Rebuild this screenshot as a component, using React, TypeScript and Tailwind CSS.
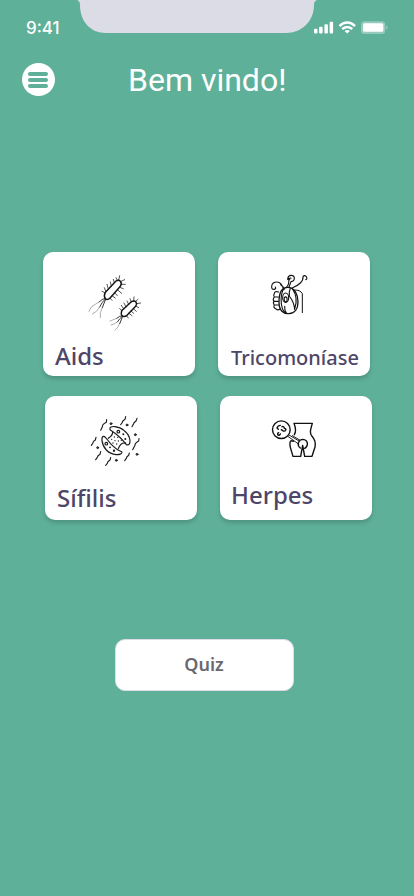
import type { ReactNode } from "react";

function StatusBar() {
  return (
    <div className="flex h-[34px] w-full items-start">
      <div className="w-[76px] pl-[26px] pt-[18px] font-['Inter',sans-serif] text-[17px] font-medium leading-[20px] text-white">
        9:41
      </div>
      <svg width="242" height="34" viewBox="0 0 242 34" className="shrink-0" aria-hidden="true">
        <path d="M1 0H241C239 .8 238 2 238 5C238 21 226 33 210 33H30C14 33 4 21 4 5C4 2 3 .8 1 0Z" fill="#dcdce6" />
      </svg>
      <svg width="76" height="16" viewBox="0 0 76 16" className="-ml-1 mt-5 shrink-0" aria-hidden="true">
        <g fill="#fff">
          <rect x="0" y="8.800" width="3.500" height="4.700" rx="1" />
          <rect x="5.100" y="6.800" width="3.500" height="6.700" rx="1" />
          <rect x="10.400" y="4.200" width="3.500" height="9.300" rx="1" />
          <rect x="15.600" y="1.800" width="3.500" height="11.700" rx="1" />
        </g>
        <g fill="none" stroke="#fff" strokeWidth="2.500">
          <path d="M25.500 6.100C30 1.300 36.500 1.300 41 6.100" />
          <path d="M28.300 9.200C31 6.200 35.500 6.200 38.200 9.200" />
        </g>
        <path d="M33.250 13.500L30.600 10.900Q33.250 8.900 35.900 10.900Z" fill="#fff" />
        <rect x="47" y="1.200" width="24.300" height="12.800" rx="3.500" fill="#fff" opacity=".35" />
        <rect x="49" y="3.300" width="20.300" height="8.500" rx="1.500" fill="#fff" />
        <path d="M72.200 5.500Q75 7.500 72.200 9.800Z" fill="#fff" opacity=".4" />
      </svg>
    </div>
  );
}

function MenuButton() {
  return (
    <button aria-label="Menu" className="flex size-[33px] shrink-0 flex-col items-center justify-center gap-[2px] rounded-full bg-white">
      <span className="h-[4px] w-[20px] rounded-full bg-[#5eb099]" />
      <span className="h-[4px] w-[20px] rounded-full bg-[#5eb099]" />
      <span className="h-[4px] w-[20px] rounded-full bg-[#5eb099]" />
    </button>
  );
}

function Bacteria() {
  return (
    <svg width="70" height="70" viewBox="0 0 210 210" fill="none" stroke="#161616" strokeLinecap="round" strokeLinejoin="round">
      <g strokeWidth="4.400">
        <path d="M75 83L108 48Q116 43 121 49Q127 56 121 64L91 98Q82 107 76 101Q71 95 75 83Z" />
        <path d="M125 137L154 110Q163 105 168 111Q172 117 167 124L141 151Q132 158 126 152Q122 147 125 137Z" />
      </g>
      <g strokeWidth="2.200">
        <path d="M76 84L66 79M78 80L73 68M85 72L81 58M94 63L91 51M103 53L100 43M112 46L108 38M116 46L119 32M121 50L134 44M123 58L136 58M119 67L130 71M112 74L125 85M104 83L112 92M96 92L106 99M89 99L96 106" />
        <path d="M126 137L119 131M131 132L124 121M138 126L132 114M146 118L141 108M154 111L150 101M161 109L162 96M166 110L174 103M170 116L182 114M167 123L176 128M160 131L169 139M153 138L161 145M147 145L156 152M139 152L145 159" />
      </g>
      <g strokeWidth="2.600">
        <path d="M76 100Q67 101 57 111M77 101Q66 110 59 126M77 102Q72 115 67 128" />
        <path d="M127 152Q119 152 110 160M128 153Q118 161 112 171M128 153Q124 165 119 176" />
      </g>
      <g strokeWidth="1.800" stroke="#777">
        <path d="M57 111Q46 118 36 124Q29 133 27 139M59 126Q53 140 37 147M67 128Q58 142 61 158" />
        <path d="M110 160L90 168M112 171Q106 177 93 180M119 176Q113 190 105 196" />
      </g>
    </svg>
  );
}

function Trichomonas() {
  return (
    <svg width="60" height="60" viewBox="0 0 180 180" fill="none" stroke="#141414" strokeWidth="3.400" strokeLinecap="round" strokeLinejoin="round">
      <path d="M83 67C62 67 57 89 57 111C57 137 70 147 87 146C105 145 114 130 114 111C114 88 104 67 83 67Z" strokeWidth="4" />
      <path d="M68 76Q59 103 67 130Q69 138 76 143M74 124Q73 135 79 144M97 71Q116 98 104 132M90 96Q102 112 104 133M91 70Q86 82 88 94" />
      <ellipse cx="77" cy="98" rx="9" ry="14" strokeWidth="3.400" />
      <ellipse cx="77" cy="103" rx="4.500" ry="7.500" strokeWidth="3.400" />
      <path d="M56 81Q43 77 43 86Q39 90 43 96Q37 103 42 109Q38 114 43 120Q39 128 47 131Q51 137 60 133M43 96H55M42 109H55M43 120H56" />
      <path d="M78 68Q89 58 86 40M87 66L93 50Q103 49 103 39C103 29 84 27 83 43M93 40Q88 37 89 44" />
      <path d="M71 75Q65 51 51 51Q37 51 35 63Q34 75 44 73Q49 70 46 66M62 59Q69 64 74 72" />
      <path d="M95 70Q112 63 121 54Q130 46 129 35Q133 29 139 35Q143 42 137 44" />
      <path d="M103 75Q121 74 127 86V143" strokeWidth="3" />
    </svg>
  );
}

function Treponema() {
  return (
    <svg width="66" height="66" viewBox="0 0 198 198" fill="none" stroke="#1c1c1c" strokeWidth="3.600" strokeLinecap="round" strokeLinejoin="round">
      <path d="M84 65C80 50 111 54 127 68C148 84 149 116 133 110C122 94 101 76 84 65Z" />
      <path d="M68 86C55 80 58 110 73 126C89 143 120 144 120 132Q106 127 94 115C77 100 77 93 68 86Z" />
      <path d="M92 72Q92 83 79 91M131 105Q116 103 109 122" />
      <circle cx="109" cy="71" r="4" />
      <circle cx="73" cy="107" r="4" />
      <g fill="#1c1c1c" stroke="none">
        <circle cx="124" cy="79" r="3" /><circle cx="130" cy="93" r="3" /><circle cx="84" cy="118" r="2.800" /><circle cx="96" cy="128" r="3.500" />
        <circle cx="97" cy="87" r="2" /><circle cx="107" cy="88" r="2" /><circle cx="89" cy="94" r="2" /><circle cx="99" cy="98" r="2" /><circle cx="109" cy="99" r="2" /><circle cx="93" cy="105" r="2" /><circle cx="104" cy="108" r="2" /><circle cx="118" cy="97" r="2" />
      </g>
      <g fill="#555" strokeWidth="3">
        <circle cx="87" cy="47" r="2.800" /><circle cx="135" cy="51" r="2.800" /><circle cx="160" cy="80" r="2.800" /><circle cx="47" cy="119" r="2.800" /><circle cx="103" cy="157" r="2.800" /><circle cx="165" cy="139" r="2.800" />
      </g>
      <g strokeWidth="3.400">
        <path d="M74 35L73 43Q60 50 61 57L56 67M131 26L129 34Q120 40 120 45L116 50M165 31L162 39Q155 44 154 49L150 56M171 92L170 99Q158 106 159 112L152 125M42 88L40 96Q32 101 33 105L28 112M56 131L54 139Q46 144 46 148L41 155M86 149L84 156Q76 161 76 166L71 172M142 135L140 142Q133 147 133 151L128 158" />
      </g>
    </svg>
  );
}

function Pelvis() {
  return (
    <svg width="64" height="64" viewBox="0 0 192 192" fill="none" stroke="#111" strokeWidth="4.200" strokeLinecap="round" strokeLinejoin="round">
      <circle cx="58" cy="65" r="26.500" />
      <path d="M97 80C103 71 102 62 96 46H151C145 66 142 76 150 85C159 95 162 103 159 117L150 145H128L122 112L116 145H93L85 118C83 107 83 102 86 99Q89 97 94 100" />
      <path d="M81 81L111 99M79 86L108 107M91 83L113 96" strokeWidth="2.800" />
      <path d="M115 120Q107 114 109 105Q113 94 123 94Q134 95 136 105Q137 116 128 121" />
      <path d="M55 52Q48 52 45 60L49 64M60 56Q66 54 67 61Q73 62 71 67Q68 71 62 68L58 65M50 74Q45 76 48 81Q53 83 55 78" />
    </svg>
  );
}

function TopicCard({ label, labelClass, iconClass, icon }: { label: string; labelClass: string; iconClass: string; icon: ReactNode }) {
  return (
    <button className="flex h-[124px] w-[152px] shrink-0 flex-col items-start rounded-[10px] bg-white text-left shadow-[0_3px_4px_rgba(0,0,0,0.16)]">
      <span className={iconClass}>{icon}</span>
      <span className={`whitespace-nowrap font-['Noto_Sans',sans-serif] font-medium leading-[24px] text-[#4e4667] ${labelClass}`}>{label}</span>
    </button>
  );
}

export default function App() {
  return (
    <main className="flex h-[896px] w-[414px] flex-col overflow-hidden bg-[#5eb099]">
      <StatusBar />
      <header className="mt-[29px] flex h-[33px] items-center pl-[21.500px]">
        <MenuButton />
        <h1 className="ml-[73.500px] whitespace-nowrap font-['Roboto',sans-serif] text-[32px] font-normal leading-[38px] text-white">Bem vindo!</h1>
      </header>
      <section className="mt-[156px] flex flex-col gap-5">
        <div className="flex gap-[23px] pl-[43px]">
          <TopicCard label="Aids" icon={<Bacteria />} iconClass="ml-[37px] mt-[13px] block" labelClass="ml-[12px] mt-[9px] text-[24px]" />
          <TopicCard label="Tricomoníase" icon={<Trichomonas />} iconClass="ml-[42px] mt-[13px] block" labelClass="ml-[13px] mt-[21px] text-[20px]" />
        </div>
        <div className="flex gap-[23px] pl-[45px]">
          <TopicCard label="Sífilis" icon={<Treponema />} iconClass="ml-[37px] mt-[12px] block" labelClass="ml-[12px] mt-[12px] text-[24px]" />
          <TopicCard label="Herpes" icon={<Pelvis />} iconClass="ml-[42px] mt-[12px] block" labelClass="ml-[11px] mt-[11px] text-[24px]" />
        </div>
      </section>
      <button className="ml-[115px] mt-[119px] flex h-[52px] w-[179px] items-center justify-center rounded-[10px] border border-[#dcdce6] bg-white pb-[2px] pr-[1px] font-['Noto_Sans',sans-serif] text-[18px] font-semibold text-[#69696f]">
        Quiz
      </button>
    </main>
  );
}
